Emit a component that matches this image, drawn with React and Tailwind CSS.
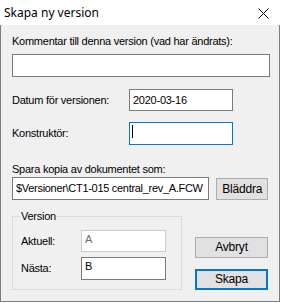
const TextBox = ({ value, className = "", disabled, focused, children }) => (
  <div
    className={`relative border bg-white pl-[3px] pt-[2px] text-[11px] leading-[13px] ${
      disabled
        ? "border-[#cccccc] bg-[#f0f0f0] text-[#6d6d6d]"
        : focused
        ? "border-[#0078d7] text-black"
        : "border-[#7a7a7a] text-black"
    } ${className}`}
  >
    {value}
    {children}
  </div>
);

const Button = ({ label, primary, className = "" }) => (
  <button
    className={`flex items-center justify-center bg-[#e1e1e1] text-[12px] tracking-[-0.2px] text-black ${
      primary ? "border-2 border-[#0078d7]" : "border border-[#adadad]"
    } ${className}`}
  >
    {label}
  </button>
);

export default function App() {
  return (
    <div
      className="w-[281px] h-[303px] bg-white overflow-hidden"
      style={{ fontFamily: '"Liberation Sans", Arial, sans-serif' }}
    >
      <div className="flex h-[25px] items-center justify-between pl-[4px] pr-[12px]">
        <span
          className="text-[12px] text-black"
          style={{ fontFamily: '"Noto Sans", "Open Sans", sans-serif' }}
        >
          Skapa ny version
        </span>
        <svg width="11" height="11" viewBox="0 0 11 11" className="mt-[1px]">
          <path d="M0.5 0.5 L10.5 10.5 M10.5 0.5 L0.5 10.5" stroke="#000" strokeWidth="1" />
        </svg>
      </div>

      <div className="h-[277px] w-[280px] border-x border-b border-[#7d7d7d] bg-[#f0f0f0] px-[11px] text-[11px] leading-[13px] tracking-[-0.25px] text-black">
        <div className="pt-[10px]">Kommentar till denna version (vad har ändrats):</div>
        <TextBox className="mt-[6px] h-[23px] w-[258px]" />

        <div className="mt-[12px] flex items-center">
          <span className="w-[117px]">Datum för versionen:</span>
          <TextBox value="2020-03-16" className="h-[22px] w-[104px] pt-[4px]" />
        </div>

        <div className="mt-[11px] flex items-center">
          <span className="w-[117px]">Konstruktör:</span>
          <TextBox focused className="h-[23px] w-[104px]">
            <span className="absolute left-[2px] top-[2px] h-[13px] w-[1px] bg-black" />
          </TextBox>
        </div>

        <div className="mt-[18px]">Spara kopia av dokumentet som:</div>
        <div className="mt-[1px] flex items-start gap-[7px]">
          <TextBox
            value="$Versioner\CT1-015 central_rev_A.FCW"
            className="h-[23px] w-[199px] whitespace-nowrap overflow-hidden pt-[4px] tracking-[-0.3px]"
          />
          <Button label="Bläddra" className="mt-[1px] h-[22px] w-[52px]" />
        </div>

        <div className="mt-[10px] flex items-start">
          <fieldset className="h-[80px] w-[171px] border border-[#dcdcdc] px-[8px]">
            <legend className="ml-[-1px] px-[1px] leading-[13px]">Version</legend>
            <div className="mt-[7px] flex items-center">
              <span className="w-[60px]">Aktuell:</span>
              <TextBox disabled value="A" className="h-[22px] w-[85px]" />
            </div>
            <div className="mt-[5px] flex items-center">
              <span className="w-[60px]">Nästa:</span>
              <TextBox value="B" className="h-[23px] w-[85px]" />
            </div>
          </fieldset>
          <div className="ml-[13px] mt-[27px] flex flex-col gap-[11px]">
            <Button label="Avbryt" className="h-[21px] w-[73px]" />
            <Button label="Skapa" primary className="h-[21px] w-[73px]" />
          </div>
        </div>
      </div>
    </div>
  );
}
